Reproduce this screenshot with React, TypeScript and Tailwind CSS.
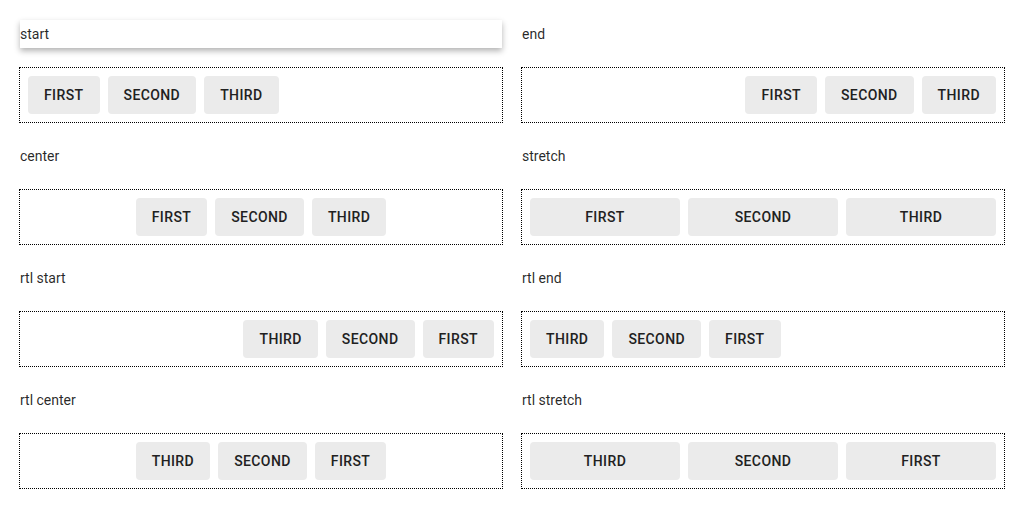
import React from 'react';

type Demo = {
  label: string;
  justify: string;
  rtl?: boolean;
  stretch?: boolean;
  focused?: boolean;
};

const demos: Demo[] = [
  { label: 'start', justify: 'justify-start', focused: true },
  { label: 'end', justify: 'justify-end' },
  { label: 'center', justify: 'justify-center' },
  { label: 'stretch', justify: 'justify-start', stretch: true },
  { label: 'rtl start', justify: 'justify-start', rtl: true },
  { label: 'rtl end', justify: 'justify-end', rtl: true },
  { label: 'rtl center', justify: 'justify-center', rtl: true },
  { label: 'rtl stretch', justify: 'justify-start', rtl: true, stretch: true },
];

const buttons = ['First', 'Second', 'Third'];

export default function App() {
  return (
    <div
      className="grid grid-cols-2 gap-x-5 gap-y-5 p-5 bg-white"
      style={{ fontFamily: 'Roboto, "Liberation Sans", sans-serif' }}
    >
      {demos.map((d) => (
        <div key={d.label} className="flex flex-col gap-5">
          <div
            className={`h-7 flex items-center text-sm text-black/85 ${
              d.focused ? 'bg-white shadow-[0_3px_6px_rgba(0,0,0,0.3)]' : ''
            }`}
          >
            {d.label}
          </div>
          <div
            dir={d.rtl ? 'rtl' : 'ltr'}
            className={`flex gap-2 p-2 outline outline-1 outline-dotted outline-black ${d.justify}`}
          >
            {buttons.map((b) => (
              <button
                key={b}
                className={`h-[38px] min-w-16 px-4 rounded bg-[#ebebeb] text-sm font-medium uppercase tracking-[0.4px] text-[#212121] ${
                  d.stretch ? 'flex-1' : ''
                }`}
              >
                {b}
              </button>
            ))}
          </div>
        </div>
      ))}
    </div>
  );
}
